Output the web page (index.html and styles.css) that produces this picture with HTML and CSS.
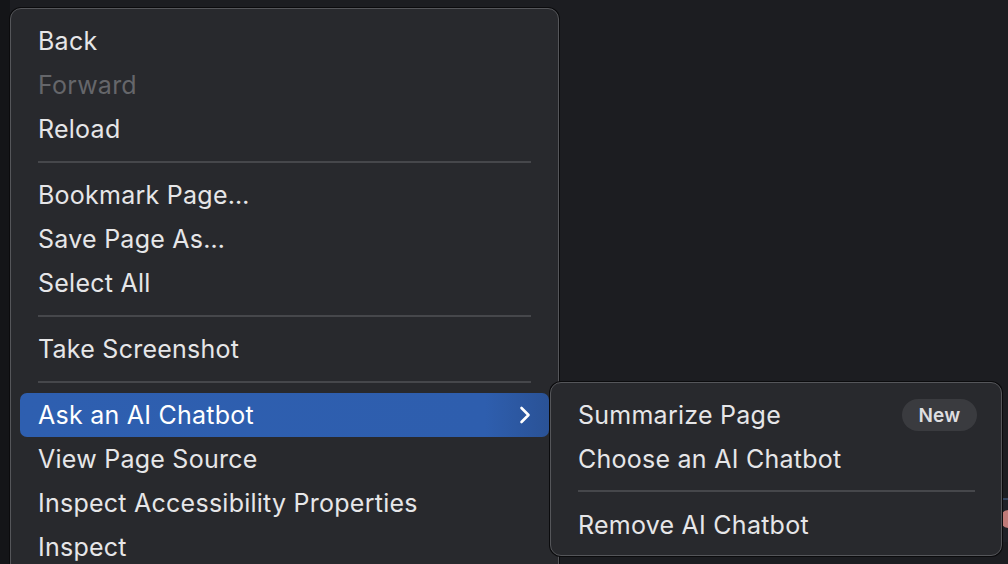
FILE: index.html
```html
<!DOCTYPE html>
<html>
<head>
<meta charset="utf-8">
<link rel="stylesheet" href="styles.css">
</head>
<body>
<div class="desk">
  <div class="strip"></div>
  <div class="peek"><span class="peek-dot"></span></div>

  <div class="menu">
    <div class="item">Back</div>
    <div class="item disabled">Forward</div>
    <div class="item">Reload</div>
    <div class="sep"></div>
    <div class="item">Bookmark Page…</div>
    <div class="item">Save Page As…</div>
    <div class="item">Select All</div>
    <div class="sep"></div>
    <div class="item">Take Screenshot</div>
    <div class="sep"></div>
    <div class="item active">
      <span>Ask an AI Chatbot</span>
      <svg class="chev" width="12" height="18" viewBox="0 0 12 18"><path d="M2.5 2 L9.5 9 L2.5 16" fill="none" stroke="#ffffff" stroke-width="2.6" stroke-linecap="round" stroke-linejoin="round"/></svg>
    </div>
    <div class="item">View Page Source</div>
    <div class="item">Inspect Accessibility Properties</div>
    <div class="item">Inspect</div>
  </div>

  <div class="submenu">
    <div class="item">
      <span>Summarize Page</span>
      <span class="badge">New</span>
    </div>
    <div class="item">Choose an AI Chatbot</div>
    <div class="sep sub-sep"></div>
    <div class="item">Remove AI Chatbot</div>
  </div>
</div>
</body>
</html>
```

FILE: styles.css
```css
* { box-sizing: border-box; }

html, body {
  margin: 0;
  padding: 0;
  width: 1008px;
  height: 564px;
  overflow: hidden;
  background: #1c1d21;
  font-family: Inter, "Noto Sans", "Liberation Sans", sans-serif;
}

.desk {
  position: relative;
  width: 1008px;
  height: 564px;
}

.strip {
  position: absolute;
  left: 0;
  top: 0;
  width: 10px;
  height: 564px;
  background: #141518;
}

.peek {
  position: absolute;
  left: 996px;
  top: 498px;
  width: 14px;
  height: 44px;
  border-top: 2px solid #34445e;
  background: #1e2026;
}

.peek-dot {
  position: absolute;
  left: 4px;
  top: 10px;
  width: 16px;
  height: 18px;
  border-radius: 50%;
  background: #c07a78;
}

.menu {
  position: absolute;
  left: 10px;
  top: 8px;
  width: 549px;
  height: 580px;
  background: #28292d;
  border: 1px solid #55565a;
  border-radius: 11px;
  box-shadow: 0 0 0 1px #0b0b0d;
  padding: 10px 9px;
}

.item {
  display: flex;
  align-items: center;
  justify-content: space-between;
  height: 44px;
  padding: 0 18px 0 18px;
  font-size: 25px;
  color: #e6e6e8;
  letter-spacing: 0.25px;
  white-space: nowrap;
}

.item.disabled {
  color: #65666a;
}

.item.active {
  background: linear-gradient(90deg, #2e5fb0 0%, #2e5eae 88%, #2a5296 100%);
  border-radius: 7px;
  color: #ffffff;
  padding-right: 18px;
}

.chev {
  display: block;
}

.sep {
  height: 22px;
  padding: 10px 18px;
}

.sep::before {
  content: "";
  display: block;
  height: 2px;
  background: #46474b;
}

.submenu {
  position: absolute;
  left: 550px;
  top: 382px;
  width: 452px;
  height: 174px;
  background: #28292d;
  border: 1px solid #55565a;
  border-radius: 11px;
  box-shadow: 0 0 0 1px #0b0b0d;
  padding: 10px 10px 7px;
}

.submenu .item {
  padding: 0 14px 0 17px;
}

.submenu .sub-sep {
  padding: 9px 16px 11px 17px;
}

.badge {
  display: inline-flex;
  align-items: center;
  justify-content: center;
  width: 75px;
  height: 32px;
  border-radius: 16px;
  background: #3a3b3f;
  color: #dedee0;
  font-size: 19px;
  font-weight: 600;
  letter-spacing: 0.3px;
}
```
